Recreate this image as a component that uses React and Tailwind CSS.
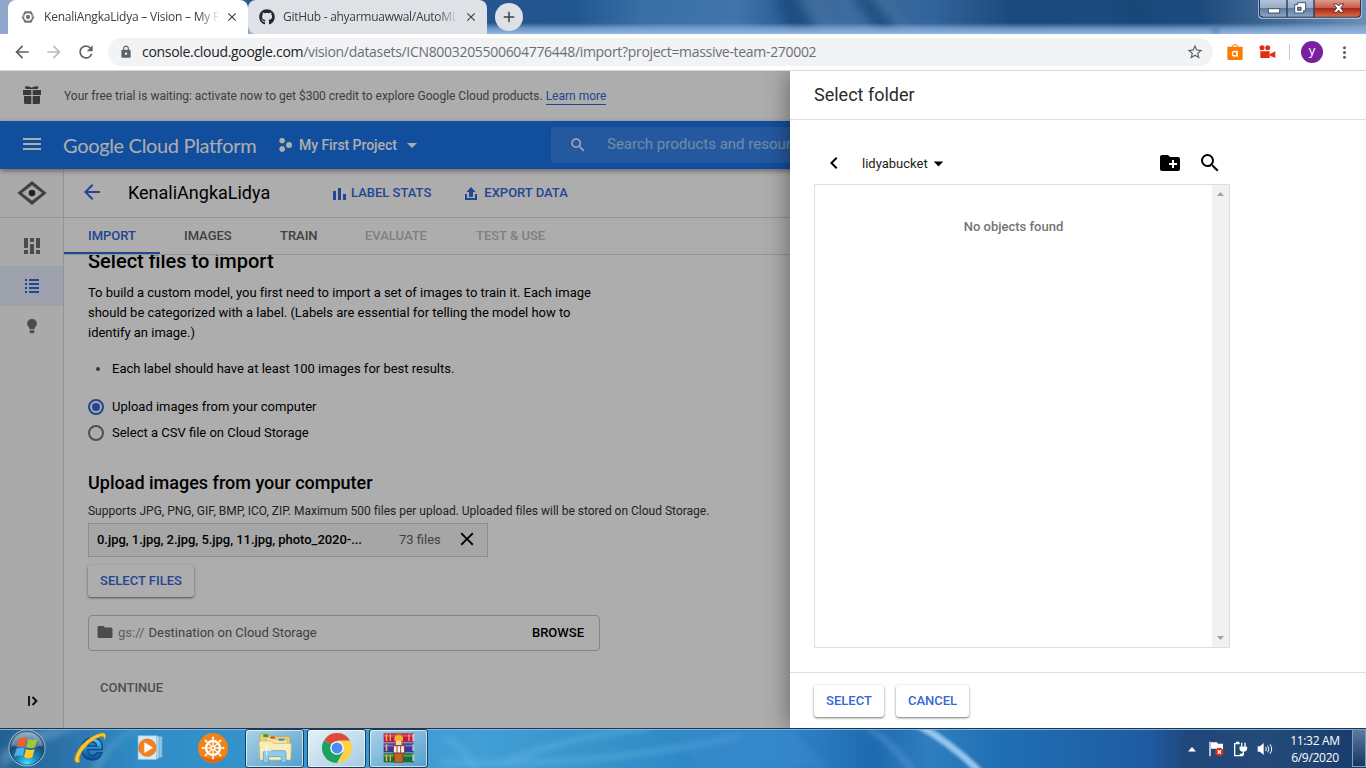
import React from "react";
import {
  MdMenu, MdSearch, MdArrowBack, MdArrowForward, MdRefresh, MdLock, MdStarBorder,
  MdFolder, MdCreateNewFolder, MdClose, MdArrowDropDown, MdKeyboardArrowLeft,
  MdMoreVert, MdAdd,
} from "react-icons/md";
import { FaGithub } from "react-icons/fa";

const segoe = "font-['Open_Sans','Noto_Sans',sans-serif]";

function CloudFavicon() {
  return (
    <svg className="h-[14px] w-[14px] shrink-0" viewBox="0 0 42 42">
      <path d="M11 4h20l9 17-9 17H11L2 21z" fill="#757575" />
      <circle cx="21" cy="21" r="9" fill="none" stroke="#fff" strokeWidth="5" />
      <path d="M3 18h6M33 18h6" stroke="#fff" strokeWidth="2" />
    </svg>
  );
}

function WindowButtons() {
  return (
    <svg className="absolute right-[3px] top-0 h-[20px] w-[105px]" viewBox="0 0 315 60">
      <defs>
        <linearGradient id="wb" x1="0" y1="0" x2="0" y2="1">
          <stop offset="0" stopColor="#b3c3d9" />
          <stop offset=".45" stopColor="#98acc6" />
          <stop offset=".5" stopColor="#5d7ba4" />
          <stop offset="1" stopColor="#8ba5c6" />
        </linearGradient>
        <linearGradient id="wr" x1="0" y1="0" x2="0" y2="1">
          <stop offset="0" stopColor="#dc9b8b" />
          <stop offset=".45" stopColor="#c9604c" />
          <stop offset=".5" stopColor="#ad2413" />
          <stop offset="1" stopColor="#d36b4a" />
        </linearGradient>
      </defs>
      <path d="M1 0v44q0 12 12 12h286q12 0 12-12V0" fill="#c6d4e6" />
      <path d="M3 0v42q0 11 11 11h284q11 0 11-11V0" fill="#26374f" />
      <path d="M6 0v40q0 10 10 10h69V0z" fill="url(#wb)" />
      <path d="M89 0h77v50H89z" fill="url(#wb)" />
      <path d="M170 0v50h126q10 0 10-10V0z" fill="url(#wr)" />
      <rect x="31" y="26" width="34" height="13" fill="#fff" stroke="#43526b" strokeWidth="3" />
      <path d="M119 8h24v24h-6v7h-27V14h9z" fill="#fff" stroke="#43526b" strokeWidth="3" />
      <rect x="119" y="22" width="10" height="9" fill="#6d86ab" stroke="#43526b" strokeWidth="3" />
      <path d="M226 12h11l5 6 5-6h11l-10 12 10 13h-11l-5-7-5 7h-11l10-13z" fill="#fff" stroke="#5b3a3d" strokeWidth="3" />
    </svg>
  );
}

function TabStrip() {
  return (
    <div className="relative flex h-[34px] shrink-0 overflow-hidden">
      <svg className="absolute inset-0 h-full w-full" viewBox="0 0 1366 34" preserveAspectRatio="none">
        <defs>
          <linearGradient id="tb">
            <stop offset="0" stopColor="#93a9cd" />
            <stop offset=".18" stopColor="#2a5796" />
            <stop offset=".42" stopColor="#22568f" />
            <stop offset=".47" stopColor="#386fa5" />
            <stop offset=".54" stopColor="#4175a9" />
            <stop offset=".57" stopColor="#2d6097" />
            <stop offset=".62" stopColor="#3f6ca0" />
            <stop offset=".68" stopColor="#33659b" />
            <stop offset=".74" stopColor="#1d4a7d" />
            <stop offset=".88" stopColor="#1e4b7d" />
            <stop offset="1" stopColor="#6b8db3" />
          </linearGradient>
          <linearGradient id="tg" x1="0" y1="0" x2="0" y2="1">
            <stop offset=".68" stopColor="#9ec1ec" stopOpacity="0" />
            <stop offset=".84" stopColor="#8db2df" stopOpacity=".7" />
            <stop offset="1" stopColor="#94b7e2" />
          </linearGradient>
          <filter id="soft"><feGaussianBlur stdDeviation="4" /></filter>
        </defs>
        <path d="M0 0h1366v34H0z" fill="url(#tb)" />
        <path d="M790 -5h28l32 44h-35z M850 -5h34l34 44h-20z" fill="#47729f" opacity=".5" filter="url(#soft)" />
        <path d="M775 -5h22l24 44h-30zM850 -5h20l35 44h-22zM1110 -5h30l30 44h-34z" fill="#174678" opacity=".7" filter="url(#soft)" />
        <path d="M0 0h1366v34H0z" fill="url(#tg)" />
        <path d="M0 0h24v34H0z" fill="#90a7cb" />
        <path d="M1212 26h7v8h-7z" fill="#4b77a5" filter="url(#soft)" />
      </svg>
      <div className={`relative flex w-full pl-[8px] text-[12px] text-[#3c4043] ${segoe}`}>
        <div className="flex h-[34px] w-[240px] items-center rounded-t-[8px] bg-white pl-[13px]">
          <CloudFavicon />
          <span className="ml-[9px] w-[176px] overflow-hidden whitespace-nowrap tracking-[-0.22px] [mask-image:linear-gradient(90deg,#000_88%,transparent)]">
            KenaliAngkaLidya – Vision – My First Project
          </span>
          <MdClose className="ml-[5px] h-[14px] w-[14px] text-[#3c4043]" />
        </div>
        <div className="flex h-[34px] w-[239px] items-center rounded-t-[8px] rounded-bl-[8px] bg-[#dee1e6] pl-[11px]">
          <FaGithub className="h-[16px] w-[16px] shrink-0 text-[#24292e]" />
          <span className="ml-[8px] w-[175px] overflow-hidden whitespace-nowrap tracking-[-0.28px] [mask-image:linear-gradient(90deg,#000_88%,transparent)]">
            GitHub - ahyarmuawwal/AutoML-Vision
          </span>
          <MdClose className="ml-[6px] h-[14px] w-[14px] text-[#3c4043]" />
        </div>
        <div className="ml-[8px] mt-[3px] flex h-[28px] w-[28px] items-center justify-center rounded-full bg-[#dee1e6]">
          <MdAdd className="h-[18px] w-[18px] text-[#3c4043]" />
        </div>
      </div>
      <WindowButtons />
    </div>
  );
}

function Toolbar() {
  return (
    <div className={`flex h-[37px] shrink-0 items-center border-b border-[#d5d7db] bg-white ${segoe}`}>
      <MdArrowBack className="ml-[12px] h-[20px] w-[20px] text-[#5f6368]" />
      <MdArrowForward className="ml-[12px] h-[20px] w-[20px] text-[#babcbe]" />
      <MdRefresh className="ml-[12px] h-[20px] w-[20px] text-[#5f6368]" />
      <div className="ml-[12px] flex h-[28px] w-[1105px] items-center rounded-full bg-[#f1f3f4] text-[14px]">
        <MdLock className="ml-[11px] h-[14px] w-[14px] text-[#5f6368]" />
        <span className="ml-[9px] whitespace-nowrap pb-[2px] tracking-[-0.31px] text-[#6b6f74]">
          <span className="text-[#202124]">console.cloud.google.com</span>/vision/datasets/ICN8003205500604776448/import?project=massive-team-270002
        </span>
        <MdStarBorder className="ml-auto mr-[9px] h-[18px] w-[18px] text-[#5f6368]" />
      </div>
      <svg className="ml-[14px] h-[16px] w-[16px]" viewBox="0 0 48 48">
        <path d="M16 10V8q0-6 8-6t8 6v2" fill="none" stroke="#f57c00" strokeWidth="3" />
        <path d="M1 8h46v36q0 4-4 4H5q-4 0-4-4z" fill="#ff7a00" />
        <circle cx="23" cy="29" r="7" fill="none" stroke="#fff" strokeWidth="4" />
        <path d="M31 20v18" stroke="#fff" strokeWidth="4" />
      </svg>
      <svg className="ml-[16px] h-[14px] w-[17px]" viewBox="0 0 51 42" fill="#e32c12">
        <circle cx="9" cy="8" r="7.500" /><circle cx="26" cy="8" r="7.500" />
        <path d="M4 19h28v20H4zM33 27l16-8v20l-16-7z" />
      </svg>
      <div className="ml-[13px] h-[16px] w-px bg-[#c8cacd]" />
      <div className="ml-[11px] flex h-[22px] w-[22px] items-center justify-center rounded-full bg-[#7b1fa2] pb-[3px] text-[13px] leading-none text-white">y</div>
      <MdMoreVert className="ml-[12px] h-[19px] w-[19px] text-[#5f6368]" />
    </div>
  );
}

function TrialBanner() {
  return (
    <div className="flex h-[50px] shrink-0 items-center text-[12px] text-[#5c5c5c]">
      <svg className="ml-[23px] h-[18px] w-[18px] -translate-y-px text-[#555]" viewBox="0 0 54 54" fill="currentColor">
        <path d="M5 2q9-4 21 3 12-7 21-3l-3 7H8z" />
        <path d="M0 12h25v15H0zM29 12h25v15H29zM3 30h22v24H7q-4 0-4-4zM29 30h22v20q0 4-4 4H29z" />
      </svg>
      <span className="ml-[23px] tracking-[-0.01px]">Your free trial is waiting: activate now to get $300 credit to explore Google Cloud products.</span>
      <span className="ml-[3px] mt-[2px] border-b border-[#3367d6] leading-[15px] text-[#3367d6]">Learn more</span>
    </div>
  );
}

function PlatformHeader() {
  return (
    <div className="relative z-10 flex h-[48px] shrink-0 items-center bg-[#1a73e8] text-white shadow-[0_2px_5px_rgba(0,0,0,0.4)]">
      <MdMenu className="ml-[20px] h-[24px] w-[24px] -translate-y-px" />
      <span className="ml-[19px] w-[193px] whitespace-nowrap font-['Lato',sans-serif] text-[20px] leading-[24px] tracking-[-0.33px]">Google Cloud Platform</span>
      <svg className="ml-[23px] h-[14px] w-[13px]" viewBox="0 0 39 42" fill="currentColor">
        <path d="M5 0h9l5 8-5 8H5L0 8zM5 25h9l5 8-5 8H5l-5-8z" />
        <circle cx="30" cy="21" r="9" />
      </svg>
      <span className="ml-[7px] w-[98px] whitespace-nowrap text-[14px] font-medium tracking-[-0.06px]">My First Project</span>
      <MdArrowDropDown className="ml-[3px] h-[24px] w-[24px]" />
      <div className="ml-[127px] flex h-[36px] flex-1 items-center rounded-[2px] bg-white/[0.12]">
        <MdSearch className="ml-[18px] h-[18px] w-[18px]" />
        <span className="ml-[20px] -translate-y-px whitespace-nowrap text-[15px] text-white/60">Search products and resources</span>
      </div>
    </div>
  );
}

function Sidebar() {
  return (
    <div className="flex w-[64px] shrink-0 flex-col border-r border-[#dadada] bg-[#fbfbfb]">
      <div className="flex h-[49px] items-center justify-center border-b border-[#dadada]">
        <svg className="h-[24px] w-[30px]" viewBox="0 0 90 72">
          <path d="M45 0l44 36-44 36L1 36z" fill="#616161" />
          <path d="M45 13l30 23-30 23-30-23z" fill="#f8f8f8" />
          <circle cx="45" cy="36" r="10" fill="#333" />
        </svg>
      </div>
      <div className="mt-[8px] flex h-[40px] items-center justify-center text-[#717171]">
        <svg className="h-[16px] w-[16px]" viewBox="0 0 16 16" fill="currentColor">
          <path d="M0 0h4v10H0zM0 12h4v4H0zM6 0h4v4H6zM6 6h4v10H6zM12 0h4v10h-4zM12 12h4v4h-4z" />
        </svg>
      </div>
      <div className="flex h-[40px] items-center justify-center bg-[#e8eefc] text-[#3367d6]">
        <svg className="h-[14px] w-[14px]" viewBox="0 0 14 14" fill="currentColor">
          <path d="M0 0h2v2H0zM4 0h10v2H4zM0 4h2v2H0zM4 4h10v2H4zM0 8h2v2H0zM4 8h10v2H4zM0 12h2v2H0zM4 12h10v2H4z" />
        </svg>
      </div>
      <div className="flex h-[40px] items-center justify-center text-[#717171]">
        <svg className="h-[15px] w-[10px]" viewBox="0 0 30 45" fill="currentColor">
          <path d="M15 0a14 14 0 0 1 9 25l-2 6H8l-2-6A14 14 0 0 1 15 0zM8 34h14v5q0 4-4 4h-6q-4 0-4-4z" />
        </svg>
      </div>
      <div className="mb-[22px] ml-[28px] mt-auto">
        <svg className="h-[10px] w-[10px]" viewBox="0 0 10 10" fill="none" stroke="#111" strokeWidth="1.8">
          <path d="M1 0v10M4.5 1l4 4-4 4" />
        </svg>
      </div>
    </div>
  );
}

function PageTabs() {
  const tabs = [
    ["IMPORT", "w-[96px] pl-[24px] border-b-2 border-[#3367d6] text-[#3367d6]"],
    ["IMAGES", "w-[96px] pl-[24px] text-[#616161]"],
    ["TRAIN", "w-[85px] pl-[24px] text-[#616161]"],
    ["EVALUATE", "w-[111px] pl-[24px] text-[#bdbdbd]"],
    ["TEST & USE", "w-[120px] pl-[24px] text-[#bdbdbd]"],
  ];
  return (
    <div className="flex h-[37px] shrink-0 border-b border-[#dadada] text-[13px] font-medium leading-[36px]">
      {tabs.map(([label, cls]) => (
        <div key={label} className={`h-[36px] whitespace-nowrap tracking-[-0.02px] ${cls}`}>{label}</div>
      ))}
    </div>
  );
}

function ImportForm() {
  return (
    <div className="flex min-h-0 flex-1 flex-col overflow-hidden pl-[24px] text-[13px] text-black">
      <h1 className="-mt-[6px] shrink-0 text-[20px] font-medium leading-[24px]">Select files to import</h1>
      <p className="mt-[10px] w-[520px] leading-[20px] tracking-[-0.01px]">
        To build a custom model, you first need to import a set of images to train it. Each image<br />
        should be categorized with a label. (Labels are essential for telling the model how to<br />
        identify an image.)
      </p>
      <div className="mt-[16px] flex h-[20px] items-center">
        <span className="ml-[8px] h-[4px] w-[4px] rounded-full bg-[#555]" />
        <span className="ml-[12px]">Each label should have at least 100 images for best results.</span>
      </div>
      <div className="mt-[18px] flex h-[20px] items-center">
        <span className="flex h-[16px] w-[16px] items-center justify-center rounded-full border-2 border-[#3367d6]">
          <span className="h-[8px] w-[8px] rounded-full bg-[#3367d6]" />
        </span>
        <span className="ml-[8px]">Upload images from your computer</span>
      </div>
      <div className="mt-[6px] flex h-[20px] items-center">
        <span className="h-[16px] w-[16px] rounded-full border-2 border-[#757575]" />
        <span className="ml-[8px]">Select a CSV file on Cloud Storage</span>
      </div>
      <h2 className="mt-[28px] shrink-0 text-[18px] font-medium leading-[24px]">Upload images from your computer</h2>
      <p className="mt-[8px] text-[12px] leading-[16px] tracking-[-0.005px] text-[#333]">
        Supports JPG, PNG, GIF, BMP, ICO, ZIP. Maximum 500 files per upload. Uploaded files will be stored on Cloud Storage.
      </p>
      <div className="mt-[4px] flex h-[34px] w-[400px] shrink-0 items-center border border-[#d0d0d0] bg-[#f5f5f5] pl-[8px]">
        <span className="w-[302px] font-medium tracking-[-0.04px]">0.jpg, 1.jpg, 2.jpg, 5.jpg, 11.jpg, photo_2020-...</span>
        <span className="w-[57px] text-[#616161]">73 files</span>
        <MdClose className="h-[22px] w-[22px] -translate-y-px" />
      </div>
      <button className="mt-[8px] h-[32px] w-[106px] shrink-0 rounded-[3px] font-medium text-[#3367d6] shadow-[0_1px_3px_rgba(0,0,0,0.4),0_1px_1px_rgba(0,0,0,0.2)]">SELECT FILES</button>
      <div className="mt-[18px] flex h-[36px] w-[512px] shrink-0 items-center rounded-[4px] border border-[#c4c4c4] text-[#616161]">
        <MdFolder className="ml-[7px] h-[18px] w-[18px] -translate-y-px text-[#717171]" />
        <span className="ml-[4px] text-[#8c8c8c]">gs://</span>
        <span className="ml-[4px]">Destination on Cloud Storage</span>
        <span className="ml-auto mr-[15px] font-medium text-black">BROWSE</span>
      </div>
      <span className="ml-[12px] mt-[27px] font-medium leading-[20px] text-[#757575]">CONTINUE</span>
    </div>
  );
}

function FolderPanel() {
  return (
    <div className="absolute right-0 top-0 flex h-full w-[576px] flex-col bg-white text-[13px] shadow-[0_0_24px_rgba(0,0,0,0.45)]">
      <div className="h-[49px] shrink-0 border-b border-[#dedede] pl-[24px] text-[18px] leading-[48px] text-[#2b2b2b]">Select folder</div>
      <div className="mt-[21px] flex h-[43px] shrink-0 items-center pl-[32px] text-[#212121]">
        <MdKeyboardArrowLeft className="h-[24px] w-[24px] text-black" />
        <span className="ml-[16px] mt-[2px]">lidyabucket</span>
        <MdArrowDropDown className="-ml-[1px] mt-px h-[23px] w-[23px] text-black" />
        <MdCreateNewFolder className="ml-auto h-[24px] w-[24px] text-black" />
        <MdSearch className="ml-[16px] mr-[144px] h-[24px] w-[24px] text-black" />
      </div>
      <div className="ml-[24px] flex h-[464px] w-[416px] shrink-0 border border-[#dedede]">
        <div className="flex-1 pt-[32px] text-center font-medium leading-[20px] text-[#757575]">No objects found</div>
        <div className="flex w-[17px] flex-col items-center justify-between bg-[#f1f1f1] py-[7px] text-[#a3a3a3]">
          <svg className="h-[4px] w-[7px]" viewBox="0 0 7 4" fill="currentColor"><path d="M3.5 0L7 4H0z" /></svg>
          <svg className="h-[4px] w-[7px]" viewBox="0 0 7 4" fill="currentColor"><path d="M0 0h7L3.500 4z" /></svg>
        </div>
      </div>
      <div className="mt-[24px] flex flex-1 items-center gap-[12px] border-t border-[#dedede] pl-[24px] font-medium text-[#3367d6]">
        <button className="h-[32px] w-[70px] rounded-[3px] shadow-[0_1px_3px_rgba(0,0,0,0.4),0_1px_1px_rgba(0,0,0,0.2)]">SELECT</button>
        <button className="h-[32px] w-[73px] rounded-[3px] shadow-[0_1px_3px_rgba(0,0,0,0.4),0_1px_1px_rgba(0,0,0,0.2)]">CANCEL</button>
      </div>
    </div>
  );
}

function StartOrb() {
  return (
    <svg className="ml-[8px] h-[38px] w-[38px]" viewBox="0 0 114 114">
      <defs>
        <radialGradient id="orb" cx=".5" cy=".95" r=".85">
          <stop offset="0" stopColor="#42e8ff" />
          <stop offset=".35" stopColor="#1e86b8" />
          <stop offset=".7" stopColor="#1c4a73" />
          <stop offset="1" stopColor="#6d92ae" />
        </radialGradient>
      </defs>
      <circle cx="57" cy="57" r="54" fill="url(#orb)" stroke="#9cc6e0" strokeWidth="3" />
      <circle cx="57" cy="57" r="51" fill="none" stroke="#16395a" strokeWidth="2" />
      <path d="M10 49a48 48 0 0 1 94 0q-47 16-94 0z" fill="#fff" opacity=".25" />
      <path d="M33 30q12-8 24-2l-6 25q-12-5-25 1z" fill="#f0612a" />
      <path d="M61 30q13 6 27-1l-7 26q-13 6-26-1z" fill="#9acb3c" />
      <path d="M25 59q12-6 25-1l-6 24q-12-6-25 1z" fill="#4fb0ee" />
      <path d="M54 60q13 6 26 0l-7 25q-13 6-25-2z" fill="#fdc92b" />
    </svg>
  );
}

function IeIcon() {
  return (
    <svg className="h-[32px] w-[34px]" viewBox="0 0 102 96">
      <defs>
        <linearGradient id="ie" x1="0" y1="0" x2="0" y2="1">
          <stop offset="0" stopColor="#6fd0f8" /><stop offset=".5" stopColor="#1f7fd0" /><stop offset="1" stopColor="#0c4b96" />
        </linearGradient>
      </defs>
      <path d="M88 53H44q1 17 15 17 9 0 13-8h15q-6 22-29 22-31-2-31-33 1-32 32-33 31 1 29 35zM44 42h27q-2-12-13-12T44 42z" fill="url(#ie)" stroke="#0d4a86" strokeWidth="4" />
      <path d="M22 88C6 99 0 84 12 62 24 35 58 9 84 4c13-3 18 4 10 20 1-12-6-14-17-8C51 26 23 57 19 76c-2 8 0 12 3 12z" fill="#fcc62d" stroke="#d5920e" strokeWidth="2" />
    </svg>
  );
}

function MediaIcon() {
  return (
    <svg className="h-[26px] w-[30px]" viewBox="0 0 90 78">
      <path d="M22 4h54v64H22z" fill="#8ec6e6" stroke="#4e94bd" strokeWidth="2" />
      <path d="M12 3h54v68H12z" fill="#b9def0" stroke="#5ba1c8" strokeWidth="2" />
      <path d="M3 2h56v72H3z" fill="#d5e9f4" stroke="#77b3d4" strokeWidth="2" />
      <circle cx="31" cy="38" r="26" fill="#f58220" stroke="#d85f10" strokeWidth="2" />
      <path d="M22 22v32l26-16z" fill="#fff" />
    </svg>
  );
}

function WheelIcon() {
  const angles = [0, 45, 90, 135, 180, 225, 270, 315];
  return (
    <svg className="h-[30px] w-[30px]" viewBox="0 0 90 90">
      <circle cx="45" cy="45" r="45" fill="#f38213" />
      <path d="M8 70A45 45 0 0 0 82 70q-37 14-74 0z" fill="#e5660a" />
      <circle cx="45" cy="45" r="21" fill="none" stroke="#fff" strokeWidth="7" />
      <circle cx="45" cy="45" r="8" fill="#fff" />
      {angles.map((a) => (
        <g key={a} transform={`rotate(${a} 45 45)`} stroke="#fff" fill="#fff">
          <path d="M45 38V16" strokeWidth="4" />
          <circle cx="45" cy="14" r="3" />
        </g>
      ))}
      <circle cx="45" cy="45" r="3" fill="#f38213" />
    </svg>
  );
}

function ExplorerIcon() {
  return (
    <svg className="h-[32px] w-[34px]" viewBox="0 0 102 96">
      <path d="M5 12q0-6 6-6h22l5 7h50q8 0 8 8v60H5z" fill="#e9cf7e" stroke="#b99a43" strokeWidth="2" />
      <path d="M16 7h15v8H16z" fill="#22a62f" />
      <path d="M25 16h22l5 6h36v60H25z" fill="#f5e3a2" stroke="#c9aa55" strokeWidth="2" />
      <path d="M38 14h12v6H38z" fill="#d6401f" /><path d="M62 20h17v6H62z" fill="#2b8ee0" />
      <path d="M3 32q0-5 5-5h32l6 7h48q6 0 6 6l-2 44H6z" fill="#f9edb9" stroke="#cfb261" strokeWidth="2" />
      <path d="M16 92V62q0-6 6-6h56q6 0 6 6v30H70V74H32v18z" fill="#8bcbed" stroke="#4c97c2" strokeWidth="2" />
      <path d="M26 42v28M12 56h28" stroke="#fff" strokeWidth="3" opacity=".8" />
    </svg>
  );
}

function ChromeIcon() {
  return (
    <svg className="h-[30px] w-[30px]" viewBox="0 0 90 90">
      <path d="M45 45L6 22.500A45 45 0 0 1 84 22.500z" fill="#de4a3c" />
      <path d="M45 45L6 22.500A45 45 0 0 0 45 90L64.500 56z" fill="#1ba261" />
      <path d="M45 22.500h39A45 45 0 0 1 45 90l19.500-34z" fill="#fed14b" />
      <circle cx="45" cy="45" r="20.500" fill="#fff" />
      <circle cx="45" cy="45" r="16.500" fill="#4c8bf5" />
    </svg>
  );
}

function ArchiveIcon() {
  return (
    <svg className="h-[30px] w-[32px]" viewBox="0 0 96 90">
      <path d="M2 1h90v27H2z" fill="#bd1745" /><path d="M2 5h90v6H2z" fill="#e64a76" /><path d="M88 3h6v22h-6z" fill="#e3b9c6" />
      <path d="M2 31h90v27H2z" fill="#3a3796" /><path d="M2 35h90v6H2z" fill="#706dcf" /><path d="M88 34h6v20h-6z" fill="#b9b8e2" />
      <path d="M2 61h90v27H2z" fill="#1d6a35" /><path d="M2 65h90v6H2z" fill="#45a35d" /><path d="M88 64h6v20h-6z" fill="#aad1b5" />
      <path d="M8 4h5v20H8zM20 4h4v20h-4zM8 64h5v21H8zM20 64h4v21h-4zM8 34h5v20H8zM76 4h4v20h-4z" fill="#e8b33c" />
      <path d="M33 58h28v32H33z" fill="#8d4518" /><path d="M36 0h22v88H36z" fill="#bd6524" />
      <path d="M34 13q13-14 26 0v10H34z" fill="#f2b62c" />
      <path d="M39 23h16v15H39z" fill="#f7d6a2" />
      <path d="M31 38h34v22H31z" fill="#f2f2f2" stroke="#8a2c1e" strokeWidth="3" />
      <path d="M42 38v22M53 38v22" stroke="#b23a22" strokeWidth="3" />
    </svg>
  );
}

function TrayIcons() {
  return (
    <div className="flex items-center">
      <svg className="h-[5px] w-[8px]" viewBox="0 0 8 5"><path d="M4 0l4 4.500H0z" fill="#fff" /></svg>
      <svg className="ml-[13px] h-[16px] w-[16px]" viewBox="0 0 48 48">
        <path d="M3 2v44" stroke="#fff" strokeWidth="4" />
        <path d="M6 4h18l3 4h15v18H25l-4-3H6z" fill="#fff" />
        <circle cx="31" cy="33" r="13" fill="#d42b1e" />
        <path d="M26 28l10 10M36 28L26 38" stroke="#fff" strokeWidth="4" />
      </svg>
      <svg className="ml-[8px] h-[16px] w-[15px]" viewBox="0 0 45 48" fill="none" stroke="#fff" strokeWidth="4">
        <path d="M20 8H5v36h24v-8" /><path d="M11 8V4h8" />
        <path d="M20 17h22v6q0 8-11 9-11-1-11-9z" fill="#fff" strokeWidth="1" />
        <path d="M26 17V5M36 17V5M31 32v8H20" />
      </svg>
      <svg className="ml-[9px] h-[14px] w-[16px]" viewBox="0 0 48 42" fill="none" stroke="#fff" strokeWidth="3">
        <path d="M2 13h7L20 3v36L9 29H2z" fill="#fff" stroke="none" />
        <path d="M26 15q4 6 0 12M32 11q7 10 0 20M39 7q10 14 0 28" />
      </svg>
    </div>
  );
}

function TaskButton({ active, children }) {
  return (
    <div className={`flex h-[39px] w-[59px] items-center justify-center rounded-[3px] border border-[#173c5c] shadow-[inset_0_0_0_1px_rgba(255,255,255,0.65)] ${active ? "bg-gradient-to-br from-[#e6f2f8] to-[#a5cbe3]" : "bg-gradient-to-br from-[#a9d2e9] to-[#4f9fcd]"}`}>
      {children}
    </div>
  );
}

function Taskbar() {
  return (
    <div className="relative h-[40px] shrink-0 overflow-hidden">
      <svg className="absolute inset-0 h-full w-full" viewBox="0 0 1366 40" preserveAspectRatio="none">
        <defs>
          <linearGradient id="bar">
            <stop offset="0" stopColor="#23618f" />
            <stop offset=".05" stopColor="#2c74ab" />
            <stop offset=".1" stopColor="#2f8cc6" />
            <stop offset=".35" stopColor="#429fd6" />
            <stop offset=".43" stopColor="#3795cb" />
            <stop offset=".5" stopColor="#2e88c6" />
            <stop offset=".58" stopColor="#2f82c8" />
            <stop offset=".64" stopColor="#1e6ab0" />
            <stop offset=".68" stopColor="#2f7ebf" />
            <stop offset=".73" stopColor="#2070b4" />
            <stop offset=".84" stopColor="#1f5ba2" />
            <stop offset=".87" stopColor="#20477b" />
            <stop offset=".93" stopColor="#244a79" />
            <stop offset="1" stopColor="#153a6c" />
          </linearGradient>
          <filter id="blur"><feGaussianBlur stdDeviation="3" /></filter>
          <filter id="blur1"><feGaussianBlur stdDeviation="1.500" /></filter>
        </defs>
        <path d="M0 0h1366v40H0z" fill="url(#bar)" />
        <path d="M0 42Q40 10 85 0h-40Q20 10 0 25zM98 42Q115 10 145 0h-8Q105 15 90 42" fill="#8ec0dd" opacity=".35" filter="url(#blur)" />
        <path d="M440 34Q600 40 740 8M500 36Q560 10 650 0M445 10q20 10 30 32" fill="none" stroke="#7cc4ec" strokeWidth="4" opacity=".45" filter="url(#blur)" />
        <path d="M670 0h120l40 40H700z" fill="#3f8fd0" opacity=".35" filter="url(#blur)" />
        <path d="M868 0q22 12 44 42" fill="none" stroke="#7bb5e4" strokeWidth="5" opacity=".4" filter="url(#blur)" />
        <path d="M916 -4q34 18 64 48" fill="none" stroke="#a9d3f5" strokeWidth="7" opacity=".85" filter="url(#blur1)" />
        <path d="M0 .5h1366" stroke="#1b3653" />
        <path d="M0 1.500h1366" stroke="#8fbbe0" opacity=".9" />
      </svg>
      <div className="relative flex h-full items-center">
        <StartOrb />
        <div className="ml-[27px]"><IeIcon /></div>
        <div className="ml-[30px]"><MediaIcon /></div>
        <div className="ml-[31px]"><WheelIcon /></div>
        <div className="ml-[17px] flex gap-[3px]">
          <TaskButton><ExplorerIcon /></TaskButton>
          <TaskButton active><ChromeIcon /></TaskButton>
          <TaskButton><ArchiveIcon /></TaskButton>
        </div>
        <div className="ml-auto mr-[16px] pt-[2px]"><TrayIcons /></div>
        <div className={`mr-[11px] flex w-[52px] flex-col items-center whitespace-nowrap pt-[2px] text-[12px] leading-[17px] tracking-[-0.3px] text-white ${segoe}`}>
          <span>11:32 AM</span>
          <span>6/9/2020</span>
        </div>
        <div className="h-[38px] w-[14px] border border-[#7f9dbd] bg-gradient-to-b from-[#5c7ba0] to-[#143763]" />
      </div>
    </div>
  );
}

export default function App() {
  return (
    <div className="flex h-[768px] w-[1366px] flex-col overflow-hidden bg-white font-['Roboto',sans-serif]">
      <TabStrip />
      <Toolbar />
      <div className="relative flex h-[657px] shrink-0 flex-col overflow-hidden">
        <TrialBanner />
        <PlatformHeader />
        <div className="flex min-h-0 flex-1">
          <Sidebar />
          <div className="flex min-w-0 flex-1 flex-col">
            <div className="flex h-[49px] shrink-0 items-center border-b border-[#dadada] text-[13px] font-medium text-[#3367d6]">
              <MdArrowBack className="ml-[16px] h-[24px] w-[24px] -translate-y-px" />
              <span className="ml-[24px] w-[205px] -translate-y-px text-[18px] font-normal text-black">KenaliAngkaLidya</span>
              <svg className="h-[12px] w-[13px] translate-y-px" viewBox="0 0 13 12" fill="currentColor"><path d="M0 3h3v9H0zM5 0h3v12H5zM10 6h3v6h-3z" /></svg>
              <span className="ml-[5px]">LABEL STATS</span>
              <svg className="ml-[34px] h-[13px] w-[12px]" viewBox="0 0 12 13" fill="currentColor"><path d="M6 0l4.500 5H8v5H4V5H1.500zM0 7h2v4h8V7h2v6H0z" /></svg>
              <span className="ml-[7px]">EXPORT DATA</span>
            </div>
            <PageTabs />
            <ImportForm />
          </div>
        </div>
        <div className="absolute inset-0 z-20 bg-black/[0.32]">
          <FolderPanel />
        </div>
      </div>
      <Taskbar />
    </div>
  );
}
